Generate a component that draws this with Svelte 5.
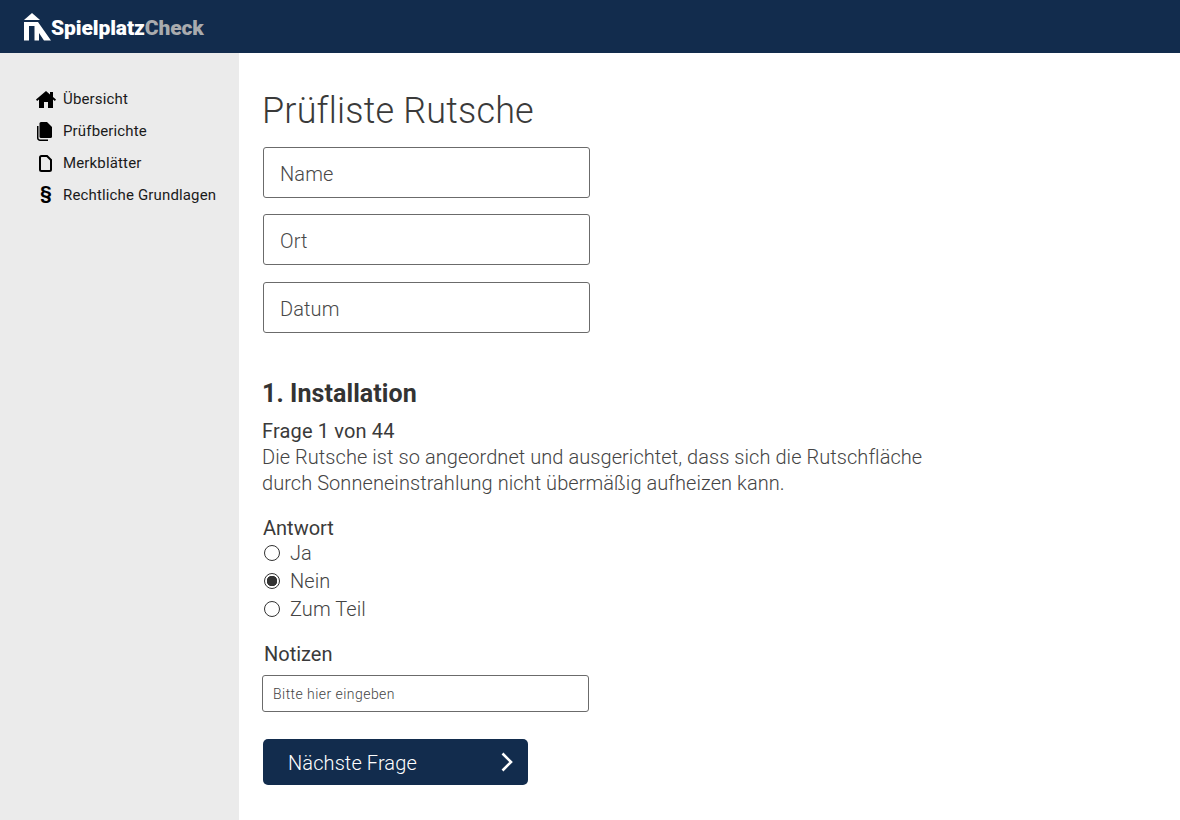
<script>
  const nav = [
    { label: 'Übersicht', icon: 'home' },
    { label: 'Prüfberichte', icon: 'files' },
    { label: 'Merkblätter', icon: 'file' },
    { label: 'Rechtliche Grundlagen', icon: 'para' }
  ];
  const answers = ['Ja', 'Nein', 'Zum Teil'];
  let answer = $state('Nein');
</script>

<div class="page">
  <header class="top">
    <a class="brand" href="#top">
      <svg class="logo" width="27" height="28" viewBox="0 0 27 28" aria-hidden="true">
        <path d="M8 0 16 7H0Z" fill="#fff" />
        <path d="M0 9H14L27 27.500H20L15 20V27.500H10.500V13H5V27.500H0Z" fill="#fff" />
      </svg>
      <span class="b1">Spielplatz</span><span class="b2">Check</span>
    </a>
  </header>
  <div class="body">
    <aside class="side">
      <nav>
        {#each nav as item}
          <a class="nav" href="#top">
            <span class="ico">
              {#if item.icon === 'home'}
                <svg width="20" height="17" viewBox="0 0 20 17"><path d="M10 0 14 3.400V1H17V6L20 8.600 18.900 10 17 8.400V17H12V11H8V17H3V8.400L1.100 10 0 8.600Z" fill="#000"/></svg>
              {:else if item.icon === 'files'}
                <svg width="16" height="19" viewBox="0 0 16 19"><path d="M5 0H11L16 5V14.500A1.500 1.500 0 0 1 14.500 16H5A1.500 1.500 0 0 1 3.500 14.500V1.500A1.500 1.500 0 0 1 5 0Z" fill="#000"/><path d="M1.750 4V16A2.250 2.250 0 0 0 4 18.250H12" fill="none" stroke="#000" stroke-width="1.500"/></svg>
              {:else if item.icon === 'file'}
                <svg class="fileico" width="13" height="17" viewBox="0 0 13 17"><path d="M2.500 1H8L12 5V14.500A1.500 1.500 0 0 1 10.500 16H2.500A1.500 1.500 0 0 1 1 14.500V2.500A1.500 1.500 0 0 1 2.500 1Z" fill="none" stroke="#000" stroke-width="2"/></svg>
              {:else}
                <span class="para">§</span>
              {/if}
            </span>
            <span>{item.label}</span>
          </a>
        {/each}
      </nav>
    </aside>
    <main class="main">
      <h1>Prüfliste Rutsche</h1>
      <div class="fields">
        <input class="big" placeholder="Name" />
        <input class="big" placeholder="Ort" />
        <input class="big" placeholder="Datum" />
      </div>
      <h2>1. Installation</h2>
      <div class="count">Frage 1 von 44</div>
      <p class="question">Die Rutsche ist so angeordnet und ausgerichtet, dass sich die Rutschfläche durch Sonneneinstrahlung nicht übermäßig aufheizen kann.</p>
      <div class="label ans">Antwort</div>
      <div class="radios">
        {#each answers as a}
          <label class="radio">
            <input type="radio" name="answer" value={a} bind:group={answer} />
            <span>{a}</span>
          </label>
        {/each}
      </div>
      <div class="label notes">Notizen</div>
      <input class="small" placeholder="Bitte hier eingeben" />
      <button class="next">
        <span class="next-label">Nächste Frage</span>
        <svg width="14" height="20" viewBox="0 0 14 20"><path d="M2.500 1.500 11 10 2.500 18.500" fill="none" stroke="#fff" stroke-width="2.600"/></svg>
      </button>
    </main>
  </div>
</div>

<style>
  :global(body) { margin: 0; background: #fff; }
  .page { width: 1180px; height: 820px; overflow: hidden; display: flex; flex-direction: column; font-family: Roboto, "Liberation Sans", sans-serif; color: #333; }
  .top { height: 53px; flex: none; background: #122c4d; display: flex; align-items: center; padding-left: 24px; }
  .brand { display: flex; align-items: center; text-decoration: none; font-weight: 900; font-size: 21px; letter-spacing: -0.1px; }
  .b1, .b2 { padding-top: 2px; }
  .b1 { color: #fff; }
  .b2 { color: #a9abae; }
  .body { flex: 1; display: flex; min-height: 0; }
  .side { width: 239px; flex: none; background: #ebebeb; padding: 30px 0 0 36px; box-sizing: border-box; }
  nav { display: flex; flex-direction: column; }
  .nav { display: flex; align-items: center; height: 32px; color: #1a1a1a; text-decoration: none; font-size: 15px; letter-spacing: 0.15px; }
  .ico { width: 27px; flex: none; display: flex; justify-content: flex-start; }
  .ico svg { display: block; }
  .fileico { margin-left: 3px; }
  .para { font-weight: 700; font-size: 19px; line-height: 20px; margin: 0 0 4px 4px; color: #000; }
  .main { flex: 1; padding: 37px 0 0 23px; min-width: 0; }
  h1 { margin: 0; font-weight: 300; font-size: 36px; line-height: 42px; color: #3a3a3a; letter-spacing: 0.18px; }
  .fields { display: flex; flex-direction: column; gap: 16.400px; margin-top: 15px; }
  input.big { box-sizing: border-box; width: 327px; height: 51px; border: 1px solid #6b6b6b; border-radius: 3px; padding: 2.600px 16px 0; font: 300 20px Roboto, sans-serif; letter-spacing: 0.1px; color: #333; margin-left: 1px; outline: none; }
  input.big::placeholder { color: #484848; opacity: 1; }
  h2 { margin: 45px 0 0; font-weight: 700; font-size: 25px; line-height: 32px; color: #333; letter-spacing: 0.08px; }
  .count { margin-top: 8px; font-size: 20px; line-height: 26px; letter-spacing: 0.15px; color: #3a3a3a; }
  .question { margin: 0; width: 680px; font-weight: 300; font-size: 20px; line-height: 26px; letter-spacing: 0.06px; color: #444; }
  .label { font-size: 20px; line-height: 26px; font-weight: 400; color: #3a3a3a; }
  .ans { margin: 19px 0 0 1px; }
  .radios { display: flex; flex-direction: column; margin-top: -2px; }
  .radio { display: flex; align-items: center; height: 28px; font-weight: 300; font-size: 20px; color: #444; letter-spacing: 0.06px; }
  .radio input { appearance: none; box-sizing: border-box; width: 16px; height: 16px; margin: 0 10px 0 2px; border: 1px solid #333; border-radius: 50%; background: #fff; }
  .radio input:checked { background: radial-gradient(circle, #333 0 5px, #fff 5.500px); }
  .notes { margin: 18px 0 0 2px; }
  input.small { display: block; box-sizing: border-box; width: 327px; height: 37px; margin-top: 8px; border: 1px solid #6b6b6b; border-radius: 3px; padding: 1px 10px 0; font: 300 14px Roboto, sans-serif; letter-spacing: 0.45px; outline: none; }
  input.small::placeholder { color: #444; opacity: 1; }
  .next { display: flex; align-items: center; justify-content: space-between; box-sizing: border-box; width: 265px; height: 46px; margin: 27px 0 0 1px; padding: 0 14px 0 25px; background: #122c4d; border: 0; border-radius: 5px; color: #fff; font: 300 20px Roboto, sans-serif; letter-spacing: 0.1px; }
  .next-label { padding-top: 2px; }
</style>
